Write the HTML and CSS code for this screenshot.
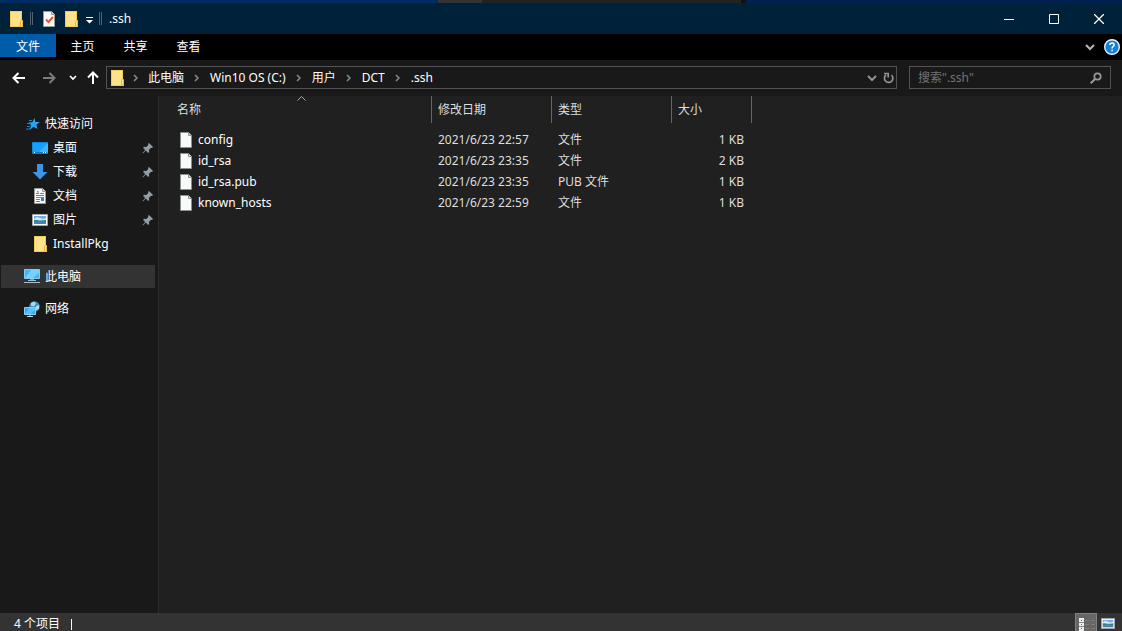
FILE: index.html
```
<!DOCTYPE html>
<html lang="zh-CN">
<head>
<meta charset="utf-8">
<title>.ssh</title>
<link rel="stylesheet" href="styles.css">
</head>
<body>
<svg class="defs" aria-hidden="true">
  <symbol id="folder" viewBox="0 0 14 16"><path d="M0 0h12v9l1 1v6H0z" fill="#ffe28a"/><path d="M.5.5h11V9l1 1v5.500H.5z" fill="none" stroke="#f3cb55"/><path d="M10.500 15V10.500l1-1.500 1 1.500V15z" fill="#ffe9a0" stroke="#e5b63c"/></symbol>
  <symbol id="file" viewBox="0 0 12 16"><path d="M.5.5h8l3 3v12H.5z" fill="#f8f9f9" stroke="#8d9090"/><path d="M8.500.5v3h3" fill="#dcdede" stroke="#8d9090"/></symbol>
  <symbol id="pin" viewBox="0 0 12 12"><path d="M7 1l4 4-1 1-1-.3L7 7.700l.2 2.300-1 1-2.400-2.400L1 11.300H.5V11l2.700-2.900L1 5.800l1-1 2.300.2 2-2L6 2z" fill="#939da6"/></symbol>
  <symbol id="crumb" viewBox="0 0 6 8"><path d="M1 1l3 3-3 3" fill="none" stroke="#8a8a8a" stroke-width="1.500"/></symbol>
  <symbol id="chevron" viewBox="0 0 10 8"><path d="M1 2l4 4 4-4" fill="none" stroke="currentColor" stroke-width="2"/></symbol>
  <symbol id="photo" viewBox="0 0 16 12"><path d="M.5.5h15v11H.5z" fill="#fff" stroke="#a3a6a8"/><path d="M2 2h12v8H2z" fill="#70aee8"/><path d="M2 5l3-2 3 1 3 1 3-1v2H2z" fill="#d4eaf8"/><path d="M2 6h3l3 1 6-1v2H2z" fill="#477979"/><path d="M2 8l6-1 6 1v2H2z" fill="#4b83b5"/></symbol>
</svg>
<div class="window">
  <div class="backdrop"></div>
  <header class="titlebar">
    <svg class="folder" aria-hidden="true"><use href="#folder"/></svg>
    <span class="divider"></span>
    <button class="quick quick-check" aria-label="属性"><svg width="12" height="16" viewBox="0 0 12 16"><path d="M.5.5h8l3 3v12H.5z" fill="#fafafa" stroke="#9b9b9b"/><path d="M8.500.5v3h3" fill="#ddd" stroke="#999"/><path d="M3 8.500l2.500 2.500L10 6" fill="none" stroke="#e4572e" stroke-width="2"/></svg></button>
    <button class="quick" aria-label="新建文件夹"><svg class="folder"><use href="#folder"/></svg></button>
    <button class="quick quick-more" aria-label="自定义快速访问工具栏"><svg width="7" height="7" viewBox="0 0 7 7"><path d="M0 0h7v1H0zM0 3h7L3.500 6.500z" fill="#fff"/></svg></button>
    <span class="divider"></span>
    <h1 class="title">.ssh</h1>
    <div class="controls">
      <button class="control" aria-label="最小化"><svg width="10" height="10"><path d="M0 5.500h10" stroke="#fff"/></svg></button>
      <button class="control" aria-label="最大化"><svg width="10" height="10"><path d="M.5.5h9v9h-9z" fill="none" stroke="#fff"/></svg></button>
      <button class="control control-close" aria-label="关闭"><svg width="10" height="10"><path d="M0 0l10 10M10 0L0 10" stroke="#fff" stroke-width="1.300"/></svg></button>
    </div>
  </header>
  <nav class="ribbon">
    <button class="tab tab-file">文件</button>
    <button class="tab">主页</button>
    <button class="tab">共享</button>
    <button class="tab">查看</button>
    <div class="ribbon-end">
      <button class="plain" aria-label="展开功能区"><svg class="chevron"><use href="#chevron"/></svg></button>
      <button class="plain" aria-label="帮助"><svg width="16" height="16"><circle cx="8" cy="8" r="7.300" fill="#1580d8" stroke="#e8f4fd" stroke-width="1.400"/><path d="M5.800 6q.2-2 2.200-2t2.200 1.800q0 1-1.200 1.800-.9.600-.9 1.900M8.100 10.800v1.500" fill="none" stroke="#fff" stroke-width="1.500"/></svg></button>
    </div>
  </nav>
  <div class="toolbar">
    <div class="history">
      <button class="plain" aria-label="后退"><svg width="14" height="12"><path d="M13 6H2M6.500 1L1.500 6l5 5" fill="none" stroke="#fff" stroke-width="2"/></svg></button>
      <button class="plain" aria-label="前进"><svg width="14" height="12"><path d="M1 6h11M7.500 1l5 5-5 5" fill="none" stroke="#7c7c7c" stroke-width="2"/></svg></button>
      <button class="plain recent" aria-label="最近位置"><svg width="8" height="6" viewBox="0 0 8 6"><path d="M1 1l3 3 3-3" fill="none" stroke="#fff" stroke-width="1.700"/></svg></button>
      <button class="plain" aria-label="向上"><svg width="12" height="13"><path d="M6 13V2M1 6.500l5-5 5 5" fill="none" stroke="#fff" stroke-width="2"/></svg></button>
    </div>
    <div class="address">
      <svg class="folder" aria-hidden="true"><use href="#folder"/></svg>
      <svg class="crumb"><use href="#crumb"/></svg><a href="#">此电脑</a>
      <svg class="crumb"><use href="#crumb"/></svg><a href="#">Win10 OS (C:)</a>
      <svg class="crumb"><use href="#crumb"/></svg><a href="#">用户</a>
      <svg class="crumb"><use href="#crumb"/></svg><a href="#">DCT</a>
      <svg class="crumb"><use href="#crumb"/></svg><a href="#">.ssh</a>
      <div class="address-end">
        <button class="plain dim" aria-label="以前的位置"><svg class="chevron"><use href="#chevron"/></svg></button>
        <button class="plain dim" aria-label="刷新"><svg width="11" height="12"><path d="M8.500 3.200A4.200 4.200 0 1 1 3 3M1 1.500h4.200v4" fill="none" stroke="currentColor" stroke-width="1.700"/></svg></button>
      </div>
    </div>
    <div class="search">
      <input type="search" aria-label="搜索" placeholder='搜索".ssh"'>
      <button class="plain dim" aria-label="开始搜索"><svg width="12" height="12"><circle cx="7.500" cy="4.500" r="3.200" fill="none" stroke="#999" stroke-width="1.700"/><path d="M5 7L.8 11.200" stroke="#999" stroke-width="2"/></svg></button>
    </div>
  </div>
  <div class="content">
    <nav class="sidebar">
      <a class="node" href="#"><svg class="star" viewBox="0 0 16 14"><path d="M10.500 1l.8 4H16l-3.600 2.600 1 4.400-3.900-2.300L5.500 13l1.600-4.500-2.600-3 3.800-.3z" fill="#25a5f5"/><path d="M5 3.500h3M3 6.500h4M3 9.500h3M2 12h4" stroke="#1686cb"/></svg>快速访问</a>
      <a class="node child" href="#"><svg width="16" height="12"><path d="M.5.5h15v11H.5z" fill="#16a0fa" stroke="#0789df"/><path d="M6 11L16 1v10z" fill="#43b4ff"/><path d="M1 10.500h14" stroke="#0877c4"/><path d="M2 10.500h1M11 10.500h1M13 10.500h1" stroke="#fff"/></svg>桌面<svg class="pin"><use href="#pin"/></svg></a>
      <a class="node child" href="#"><svg width="16" height="16"><path d="M5 0h6v8h4.500L8 15.500.5 8H5z" fill="#3c96e8"/></svg>下载<svg class="pin"><use href="#pin"/></svg></a>
      <a class="node child" href="#"><svg width="16" height="16"><path d="M2.500.5h8l3 3v12h-11z" fill="#fafafa" stroke="#9a9a9a"/><path d="M10.500.5v3h3" fill="#ddd" stroke="#999"/><path d="M4 5.500h3M8 5.500h4M4 7.500h8M4 11.500h4M4 13.500h4" stroke="#3e91d0"/><path d="M5 4l1-1v3M4 9.500h8" stroke="#6c8da7" fill="none"/><path d="M9 10h3v3H9z" fill="#347fb2"/></svg>文档<svg class="pin"><use href="#pin"/></svg></a>
      <a class="node child" href="#"><svg width="16" height="12"><use href="#photo"/></svg>图片<svg class="pin"><use href="#pin"/></svg></a>
      <a class="node child" href="#"><svg width="16" height="16" viewBox="-2 0 16 16"><use href="#folder" width="14" height="16"/></svg>InstallPkg</a>
      <a class="node root selected" href="#"><svg width="16" height="15"><path d="M.5.5h15v9H.5z" fill="#42b7f6" stroke="#83cdf2"/><path d="M7 1h8v3L9 9H1z" fill="#78d0ff"/><path d="M6 10h4v1H6z" fill="#7f99a8"/><path d="M4 11.500h8M0 13.500h16" stroke="#aebbc4"/></svg>此电脑</a>
      <a class="node root" href="#"><svg width="16" height="16"><circle cx="10.500" cy="5.500" r="5.300" fill="#3c8db8"/><path d="M7 2l3-1.500 2 2-2 3-3-1zM12 5l3-1v4l-3 1z" fill="#a7dcef"/><path d="M.5 6.500h11v7H.5z" fill="#2ea7ef" stroke="#91cdec"/><path d="M5 7h6v2l-4 4H1z" fill="#56c2fb"/><path d="M6 14v1M3 15.500h6" stroke="#cad5db"/></svg>网络</a>
    </nav>
    <main class="files">
      <table class="list">
        <colgroup><col class="col-name"><col class="col-mid"><col class="col-mid"><col class="col-size"></colgroup>
        <thead><tr>
          <th><div class="head">名称<svg class="sort" width="9" height="5"><path d="M.5 4.500l4-4 4 4" fill="none" stroke="#aaa"/></svg></div></th>
          <th><div class="head">修改日期</div></th><th><div class="head">类型</div></th><th><div class="head">大小</div></th>
        </tr></thead>
        <tbody>
          <tr><td><span class="name"><svg class="file"><use href="#file"/></svg>config</span></td><td>2021/6/23 22:57</td><td>文件</td><td>1 KB</td></tr>
          <tr><td><span class="name"><svg class="file"><use href="#file"/></svg>id_rsa</span></td><td>2021/6/23 23:35</td><td>文件</td><td>2 KB</td></tr>
          <tr><td><span class="name"><svg class="file"><use href="#file"/></svg>id_rsa.pub</span></td><td>2021/6/23 23:35</td><td>PUB 文件</td><td>1 KB</td></tr>
          <tr><td><span class="name"><svg class="file"><use href="#file"/></svg>known_hosts</span></td><td>2021/6/23 22:59</td><td>文件</td><td>1 KB</td></tr>
        </tbody>
      </table>
    </main>
  </div>
  <footer class="status">
    <span>4 个项目</span><span class="bar"></span>
    <div class="views">
      <button class="view view-on" aria-label="详细信息"><svg width="20" height="14"><path d="M3 1h5v13H3z" fill="#eee"/><path d="M5 3h1v1H5z" fill="#295fc0"/><path d="M5 7h1v1H5z" fill="#2d86d0"/><path d="M5 11h1v1H5z" fill="#d22"/><path d="M3 5.500h5M3 9.500h5" stroke="#888"/><path d="M9 3.500h4M15 3.500h4M9 7.500h4M15 7.500h4M9 11.500h4M15 11.500h4" stroke="#7b7b7b"/></svg></button>
      <button class="view" aria-label="大缩略图"><svg width="14" height="11" viewBox="0 0 16 12" preserveAspectRatio="none"><use href="#photo" width="16" height="12"/></svg></button>
    </div>
  </footer>
</div>
</body>
</html>
```
FILE: styles.css
```
* { box-sizing: border-box; }
body { margin: 0; background: #202020; color: #fff; font: 12px/18px "Noto Sans", "Noto Sans CJK SC", sans-serif; overflow: hidden; }
button, input { font: inherit; color: inherit; border: 0; padding: 0; margin: 0; background: none; }
a { color: inherit; text-decoration: none; }
svg { display: block; flex: none; }
.defs { position: absolute; width: 0; height: 0; }
.window { display: flex; flex-direction: column; height: 100vh; }
.folder { width: 14px; height: 16px; }
.chevron { width: 10px; height: 8px; }
.plain { display: flex; align-items: center; justify-content: center; }
.dim { color: #929292; }

.backdrop { height: 3px; flex: none; background: linear-gradient(90deg, #002b63 0 39%, #333 39% 43%, #222 43% 66%, #111 66% 66.500%, #002050 66.500%); }
.titlebar { display: flex; align-items: center; height: 31px; flex: none; padding-left: 10px; background: #00213a; }
.divider { width: 3px; height: 13px; margin: 0 7px 0 6px; border: solid #53616d; border-width: 0 1px; }
.quick { display: flex; }
.quick-check { margin: 0 10px 0 3px; }
.quick-more { margin: 3px 0 0 7px; }
.title { margin: 0; font-size: 12px; font-weight: 400; line-height: 18px; }
.controls { display: flex; margin-left: auto; }
.control { display: flex; align-items: center; justify-content: center; width: 45px; height: 30px; }
.control-close { width: 46px; }

.ribbon { display: flex; height: 26px; flex: none; background: #000; }
.tab { width: 53px; height: 23px; padding-top: 2px; }
.tab-file { width: 56px; background: #005ba8; }
.ribbon-end { display: flex; align-items: center; gap: 9px; margin-left: auto; padding-right: 2px; color: #b8b8b8; }

.toolbar { display: flex; align-items: center; height: 36px; flex: none; padding: 0 11px 1px 12px; background: #191919; }
.history { display: flex; align-items: center; width: 94px; gap: 10px; }
.history .plain:first-child { margin-right: 6px; }
.history .recent { margin-left: 3px; }
.address { display: flex; align-items: center; flex: 1; min-width: 0; height: 23px; padding: 0 2px 0 4px; border: 1px solid #535353; }
.crumb { width: 6px; height: 8px; margin: 0 10px; }
.address .folder + .crumb { margin: 0 9px 0 8px; }
.address a { white-space: nowrap; }
.address-end { display: flex; gap: 6px; margin-left: auto; }
.search { display: flex; align-items: center; width: 202px; height: 23px; margin-left: 12px; padding: 0 8px; border: 1px solid #535353; }
.search input { flex: 1; min-width: 0; height: 21px; outline: 0; appearance: none; }
.search input::placeholder { color: #747474; opacity: 1; }

.content { display: flex; flex: 1; min-height: 0; }
.sidebar { width: 159px; flex: none; padding: 16px 3px 0 1px; background: #191919; border-right: 1px solid #2b2b2b; }
.node { display: flex; align-items: center; gap: 5px; height: 24px; padding-left: 23px; }
.star { width: 16px; height: 14px; }
.child { padding-left: 31px; }
.root { height: 23px; margin-top: 9px; }
.selected { background: #333; }
.pin { width: 12px; height: 12px; margin: 0 1px 0 auto; }

.files { flex: 1; min-width: 0; }
.list { table-layout: fixed; width: 593px; border-collapse: collapse; color: #dedede; }
.col-name { width: 273px; }
.col-mid { width: 120px; }
.col-size { width: 80px; }
th { padding: 0 0 6px; font-weight: 400; text-align: left; }
.head { display: flex; align-items: center; height: 27px; padding-left: 6px; border-right: 1px solid #636363; }
th:first-child .head { padding-left: 18px; position: relative; }
.sort { position: absolute; top: 0; left: 138px; }
td { height: 21px; padding: 0 0 0 6px; line-height: 18px; white-space: nowrap; }
td:first-child { padding-left: 21px; color: #fff; }
td:last-child { padding-right: 8px; text-align: right; }
.name { display: flex; align-items: center; gap: 6px; }
.file { width: 12px; height: 16px; }

.status { display: flex; height: 18px; flex: none; padding-left: 14px; background: #333; line-height: 22px; }
.bar { width: 1px; height: 11px; margin: 6px 0 0 11px; background: #fff; }
.views { display: flex; margin-left: auto; padding-right: 3px; }
.view { display: flex; justify-content: center; width: 22px; padding-top: 5px; }
.view-on { padding-top: 3px; background: #666; border: solid #808080; border-width: 1px 1px 0; }
```
